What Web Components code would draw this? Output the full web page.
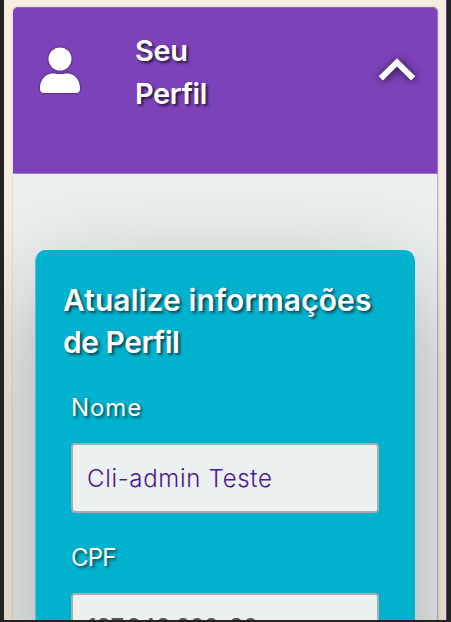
<!DOCTYPE html>
<html lang="pt-BR">
<head>
<meta charset="utf-8">
<title>Seu Perfil</title>
<style>
html,body{margin:0;height:622px;overflow:hidden;background:#252322}
body{font-family:Inter,"Open Sans",sans-serif;color:#fff}
</style>
</head>
<body>
<profile-page>
<accordion-card>
<accordion-head slot="head">Seu<br>Perfil</accordion-head>
<profile-form heading="Atualize informações|de Perfil">
<form-field class="name" label="Nome">Cli-admin Teste</form-field>
<form-field class="cpf" label="CPF">187.943.220-80</form-field>
</profile-form>
</accordion-card>
</profile-page>
<script>
const define=(name,html,setup)=>customElements.define(name,class extends HTMLElement{
  constructor(){super();this.attachShadow({mode:'open'}).innerHTML=html;}
  connectedCallback(){if(setup)setup(this,this.shadowRoot);}
});

define('form-field',`<style>
:host{display:block;width:308px;margin-left:36px;height:150px}
label{display:block;height:45px;line-height:19px;font-size:24px;letter-spacing:var(--label-ls,0);text-shadow:2px 2px 3px rgba(0,0,0,.6)}
.box{box-sizing:border-box;height:70px;border:2px solid #aaabad;border-radius:4px;background:#ecf0f1;padding:0 14px;line-height:67px;font-size:24px;font-weight:300;color:#4b1594;letter-spacing:var(--value-ls,0);white-space:nowrap}
:host(.name){--label-ls:.9px;--value-ls:.7px}
:host(.cpf){--label-ls:-.8px;--value-ls:-.6px}
:host(.cpf) .box{color:#555;line-height:65px;font-weight:400}
</style><label></label><div class="box"><slot></slot></div>`,(h,r)=>{r.querySelector('label').textContent=h.getAttribute('label');});

define('profile-form',`<style>
:host{display:block;box-sizing:border-box;width:380px;height:520px;margin:76px 0 0 22px;background:#00b2ce;border-left:1px solid #5dbfce;border-radius:11px;box-shadow:0 36px 110px rgba(0,0,0,.31);padding-top:29px}
h2{margin:0 0 35px 27px;font-size:30px;line-height:42px;font-weight:600;white-space:nowrap;text-shadow:2px 2px 3px rgba(0,0,0,.65)}
h2 span{display:block;letter-spacing:.1px}
h2 span+span{letter-spacing:-.5px}
::slotted(form-field){margin-left:35px}
</style><h2></h2><slot></slot>`,(h,r)=>{
  r.querySelector('h2').replaceChildren(...h.getAttribute('heading').split('|').map(t=>{const s=document.createElement('span');s.textContent=t;return s;}));
  h.querySelectorAll('form-field').forEach(f=>f.style.marginLeft='35px');
});

define('user-icon',`<style>:host{display:block;width:44px;height:50px}svg{display:block;overflow:visible;filter:drop-shadow(0 0 1px rgba(0,0,0,.7))}</style>
<svg width="44" height="50" viewBox="0 0 44 50" fill="#fff"><circle cx="22" cy="13" r="11.5"/><path d="M2 42C2 33 8 27.200 16 27.200C19 28.400 25 28.400 28 27.200C36 27.200 42 33 42 42V43Q42 47 38 47H6Q2 47 2 43Z"/></svg>`);

define('chevron-up',`<style>:host{display:block}svg{display:block;overflow:visible;filter:drop-shadow(1px 1px 4px rgba(0,0,0,.75))}</style>
<svg width="38" height="24" viewBox="0 0 38 24" fill="none" stroke="#fff" stroke-width="5.900"><path d="M2.800 20.300L19 4.400L35.200 20.300"/></svg>`);

define('accordion-head',`<style>
:host{display:grid;grid-template-columns:97px 1fr 38px;box-sizing:border-box;height:167px;padding:21px 21px 0 25px;background:#7d42ba;border:1px solid #a078cb;border-top-color:#8b6f9b;border-left:0;border-radius:5px 5px 0 0}
user-icon{margin-top:17px}
.title{font-size:29px;line-height:43px;font-weight:600;letter-spacing:-.4px;text-shadow:2px 2px 3px rgba(0,0,0,.7)}
chevron-up{margin-top:29px}
</style><user-icon></user-icon><div class="title"><slot></slot></div><chevron-up></chevron-up>`);

define('accordion-card',`<style>
:host{display:block;box-sizing:border-box;width:425px;height:613px;background:#ecf0f1;border-radius:5px 5px 0 0;box-shadow:0 0 2px rgba(90,70,50,.35)}
slot[name=head]{display:block;height:167px}
.edge{box-sizing:border-box;height:446px;border-right:1px solid #bfb0d2;display:flow-root}
</style><slot name="head"></slot><div class="edge"><slot></slot></div>`);

define('profile-page',`<style>
:host{display:block;box-sizing:border-box;width:443px;height:620px;margin-left:4px;overflow:hidden;background:#f6eee1;border-right:1px solid #653898;padding:7px 0 0 9px}
</style><slot></slot>`);
</script>
</body>
</html>
